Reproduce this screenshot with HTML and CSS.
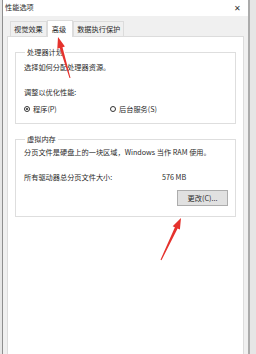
FILE: index.html
```html
<!DOCTYPE html>
<html lang="zh-CN">
<head>
  <meta charset="UTF-8" />
  <title>性能选项</title>
  <link rel="stylesheet" href="styles.css">
</head>
<body>

  <div class="window">
    <div class="titlebar">
      <span>性能选项</span>
      <span class="close">✕</span>
    </div>

    <div class="tabs">
      <div class="tab">视觉效果</div>
      <div class="tab active">高级</div>
      <div class="tab">数据执行保护</div>
    </div>

    <div class="frame">
      <div class="panel">
        <fieldset class="group group-cpu">
          <legend>处理器计划</legend>
          <p class="line">选择如何分配处理器资源。</p>
          <p class="line gap-lg">调整以优化性能:</p>
          <div class="radios">
            <label class="radio-item"><span class="radio checked"></span>程序(P)</label>
            <label class="radio-item"><span class="radio"></span>后台服务(S)</label>
          </div>
        </fieldset>

        <fieldset class="group group-mem">
          <legend>虚拟内存</legend>
          <p class="line">分页文件是硬盘上的一块区域，Windows 当作 RAM 使用。</p>
          <div class="size-row">
            <span class="size-label">所有驱动器总分页文件大小:</span>
            <span>576 MB</span>
          </div>
          <div class="actions">
            <button type="button">更改(C)...</button>
          </div>
        </fieldset>
      </div>
    </div>
  </div>

  <!-- red annotation arrows drawn over the dialog -->
  <svg class="marks" width="256" height="354" viewBox="0 0 256 354">
    <polygon fill="#e5322d" points="58,37 64.9,46.4 62.5,47.2 70.5,77.9 69.5,78.1 59.7,48 57.3,48.7"/>
    <polygon fill="#e5322d" points="181,218 179.9,229.6 177.6,228.5 161.5,260.2 160.5,259.8 174.9,227.3 172.7,226.2"/>
  </svg>

</body>
</html>
```

FILE: styles.css
```css
html, body {
  margin: 0;
  padding: 0;
}

body {
  width: 256px;
  height: 354px;
  overflow: hidden;
  position: relative;
  background-color: #e6e6e6;
  font-family: "Noto Sans CJK SC", "Noto Sans", sans-serif;
  font-size: 7.2px;
  color: #2a2a2a;
}

.window {
  margin-left: 2px;
  width: 248px;
  height: 354px;
  display: flex;
  flex-direction: column;
  border-left: 1px solid #8e8e8e;
  border-right: 2px solid #ababab;
  background-color: #f0f0f0;
  box-sizing: border-box;
}

.titlebar {
  height: 16px;
  display: flex;
  justify-content: space-between;
  align-items: center;
  padding: 0 7px 2px 2px;
  background-color: #fff;
  box-sizing: border-box;
}

.close {
  font-size: 8px;
  color: #333;
}

.tabs {
  height: 20px;
  display: flex;
  align-items: flex-end;
  padding-left: 7px;
  box-sizing: border-box;
}

.tab {
  height: 15px;
  line-height: 14px;
  padding: 0 3px;
  border: 1px solid #dcdcdc;
  border-bottom: none;
  box-sizing: border-box;
  background-color: #f0f0f0;
}

.tab.active {
  height: 17px;
  line-height: 17px;
  margin-bottom: -1px;
  padding: 0 6px 0 4px;
  background-color: #fff;
  position: relative;
  z-index: 1;
}

.frame {
  flex: 1;
  padding: 0 4px 0 4px;
  display: flex;
}

.panel {
  flex: 1;
  background-color: #fff;
  border: 1px solid #dcdcdc;
  border-bottom: none;
  padding: 10px 7px 0 7px;
}

.group {
  margin: 0;
  border: 1px solid #dedede;
  padding: 0 7px 0 8px;
}

.group legend {
  padding: 0 2px;
  margin-left: 1px;
  line-height: 10px;
}

.line {
  margin: 0;
  line-height: 10px;
  white-space: nowrap;
}

.group-cpu {
  padding-top: 5px;
  padding-bottom: 9px;
}

.gap-lg {
  margin-top: 15px;
}

.radios {
  display: flex;
  margin-top: 7px;
  line-height: 10px;
}

.radio-item {
  display: flex;
  align-items: center;
  gap: 3px;
  width: 86px;
}

.radio {
  width: 6px;
  height: 6px;
  border: 1px solid #333;
  border-radius: 50%;
  box-sizing: border-box;
  position: relative;
}

.radio.checked::after {
  content: "";
  position: absolute;
  left: 1px;
  top: 1px;
  width: 2px;
  height: 2px;
  border-radius: 50%;
  background-color: #222;
}

.group-mem {
  margin-top: 10px;
  padding-top: 3px;
  padding-bottom: 10px;
}

.size-row {
  display: flex;
  margin-top: 15px;
  line-height: 10px;
}

.size-label {
  width: 138px;
}

.actions {
  display: flex;
  justify-content: flex-end;
  margin-top: 8px;
}

button {
  width: 51px;
  height: 16px;
  padding: 0;
  font-family: inherit;
  font-size: 7.2px;
  color: #2a2a2a;
  background-color: #e1e1e1;
  border: 1px solid #adadad;
}

.marks {
  position: absolute;
  left: 0;
  top: 0;
}
```
